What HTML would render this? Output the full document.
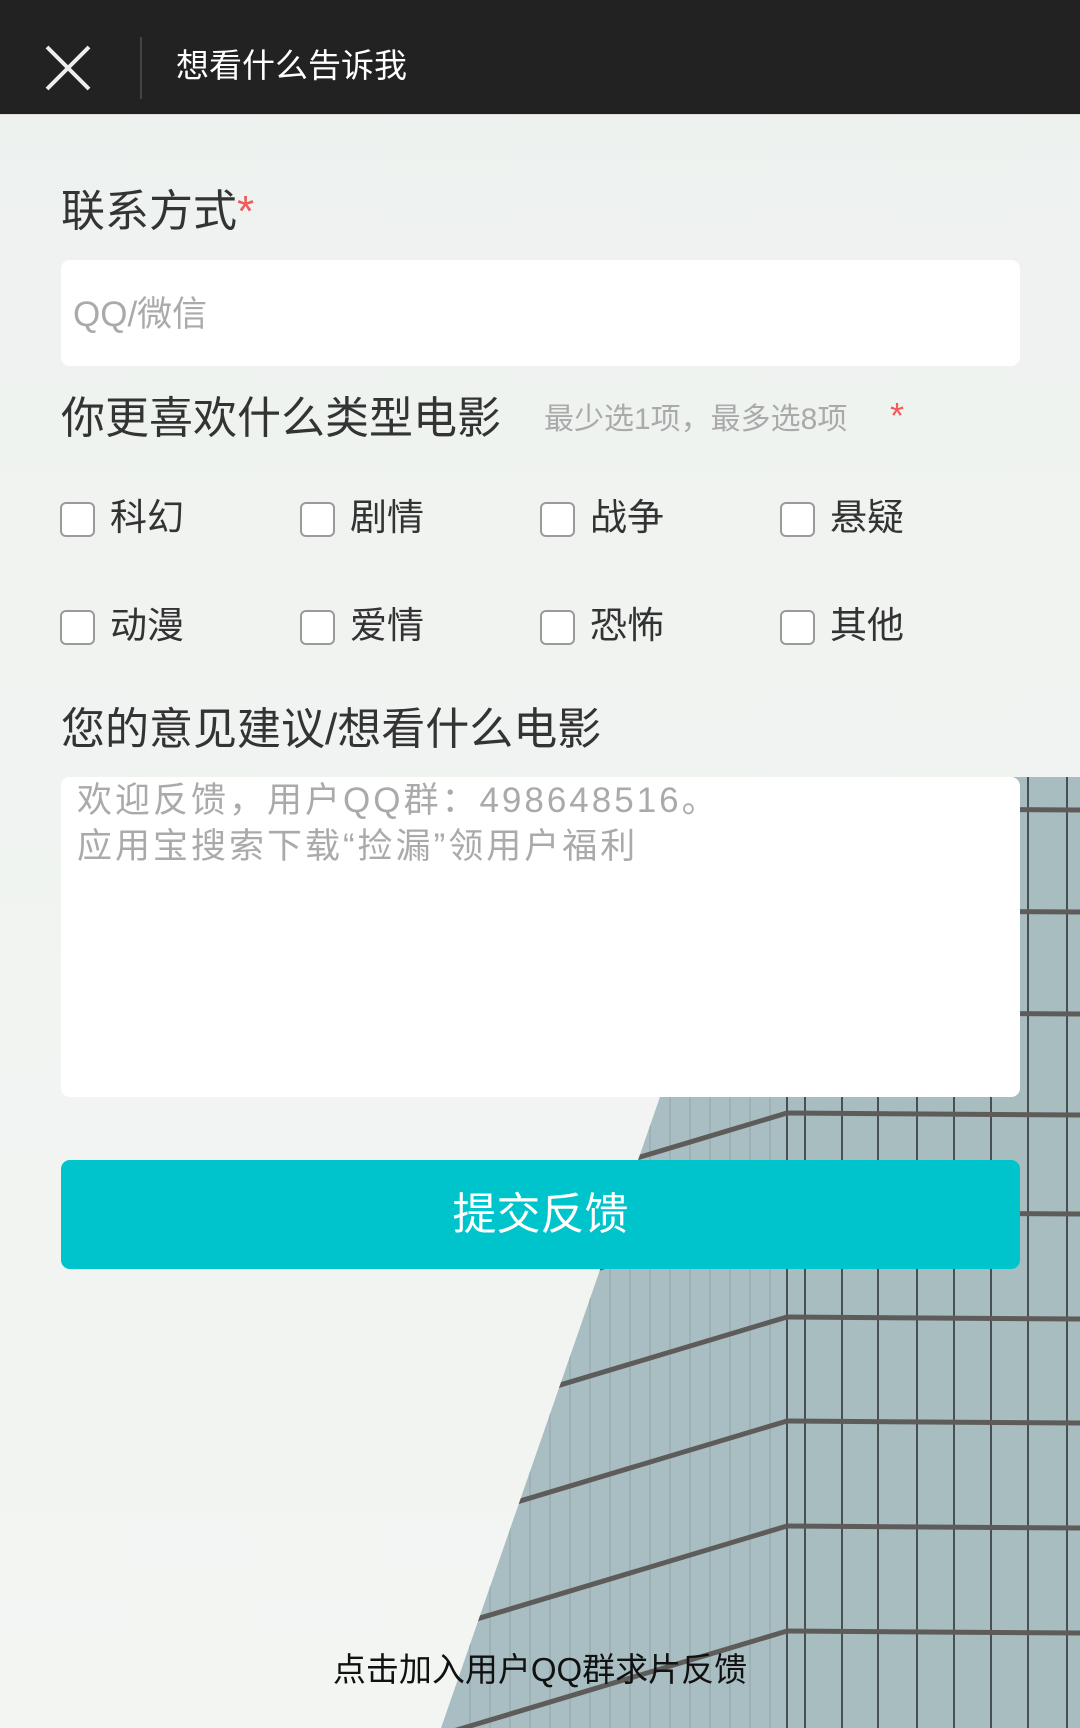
<!DOCTYPE html>
<html><head><meta charset="utf-8"><style>
*{margin:0;padding:0;box-sizing:border-box}
body{width:1080px;height:1728px;overflow:hidden;position:relative;background:#eff2ef;font-family:"Liberation Sans","Noto Sans CJK SC",sans-serif}
.bg{position:absolute;left:0;top:0}
.hdr{position:absolute;left:0;top:0;width:1080px;height:115px;background:#222222;border-bottom:1px solid #ddd}
.hdr .div{position:absolute;left:140px;top:37px;width:2px;height:62px;background:#444}
.hdr .t{position:absolute;left:176px;top:46px;font-size:33px;color:#fff;line-height:40px}
.a{position:absolute;color:#333;white-space:nowrap}
.box{position:absolute;background:#fff;border-radius:9px}
.cb{position:absolute;width:35px;height:35px;border:2px solid #9a9a9a;border-radius:6px;background:#fff}
.lab{position:absolute;font-size:37px;color:#333;line-height:44px}
.btn{position:absolute;left:61px;top:1160px;width:959px;height:109px;background:#00c4cc;border-radius:9px;color:#fff;font-size:44px;text-align:center;line-height:109px}
</style></head><body>
<svg class="bg" width="1080" height="1728" viewBox="0 0 1080 1728">
<defs>
<linearGradient id="sky" x1="0" y1="0" x2="0" y2="1"><stop offset="0" stop-color="#eef2ef"/><stop offset="1" stop-color="#f3f5f3"/></linearGradient>
<clipPath id="bld"><polygon points="441,1728 771,777 1080,777 1080,1728"/></clipPath>
</defs>
<rect width="1080" height="1728" fill="url(#sky)"/>
<g clip-path="url(#bld)">
<rect x="400" y="770" width="680" height="960" fill="#a9bec2"/>
<rect x="787" y="770" width="293" height="960" fill="#a8bdc0"/>
<g stroke="#93a7aa" stroke-width="1">
<line x1="470" y1="770" x2="470" y2="1728"/><line x1="490" y1="770" x2="490" y2="1728"/><line x1="510" y1="770" x2="510" y2="1728"/><line x1="530" y1="770" x2="530" y2="1728"/><line x1="550" y1="770" x2="550" y2="1728"/><line x1="570" y1="770" x2="570" y2="1728"/><line x1="590" y1="770" x2="590" y2="1728"/><line x1="610" y1="770" x2="610" y2="1728"/><line x1="630" y1="770" x2="630" y2="1728"/><line x1="650" y1="770" x2="650" y2="1728"/><line x1="670" y1="770" x2="670" y2="1728"/><line x1="690" y1="770" x2="690" y2="1728"/><line x1="710" y1="770" x2="710" y2="1728"/><line x1="730" y1="770" x2="730" y2="1728"/><line x1="750" y1="770" x2="750" y2="1728"/><line x1="770" y1="770" x2="770" y2="1728"/>
</g>
<g stroke="#4a5052" stroke-width="2">
<line x1="787" y1="770" x2="787" y2="1728"/><line x1="805" y1="770" x2="805" y2="1728"/><line x1="842" y1="770" x2="842" y2="1728"/><line x1="878" y1="770" x2="878" y2="1728"/><line x1="917" y1="770" x2="917" y2="1728"/><line x1="954" y1="770" x2="954" y2="1728"/><line x1="991" y1="770" x2="991" y2="1728"/><line x1="1028" y1="770" x2="1028" y2="1728"/><line x1="1067" y1="770" x2="1067" y2="1728"/>
</g>
<g stroke="#5e5c5a" stroke-width="5">
<line x1="787" y1="808" x2="1080" y2="810"/><line x1="787" y1="910" x2="1080" y2="912"/><line x1="787" y1="1012" x2="1080" y2="1014"/><line x1="787" y1="1113" x2="1080" y2="1115"/><line x1="787" y1="1212" x2="1080" y2="1214"/><line x1="787" y1="1317" x2="1080" y2="1319"/><line x1="787" y1="1421" x2="1080" y2="1423"/><line x1="787" y1="1526" x2="1080" y2="1528"/><line x1="787" y1="1631" x2="1080" y2="1633"/>
<line x1="787" y1="1113" x2="400" y2="1229"/><line x1="787" y1="1212" x2="400" y2="1328"/><line x1="787" y1="1317" x2="400" y2="1433"/><line x1="787" y1="1421" x2="400" y2="1537"/><line x1="787" y1="1526" x2="400" y2="1642"/><line x1="787" y1="1631" x2="400" y2="1747"/>
</g>
</g>
</svg>
<div class="hdr">
<svg style="position:absolute;left:44px;top:44px" width="48" height="48" viewBox="0 0 48 48"><path d="M3 3L45 45M45 3L3 45" stroke="#eee" stroke-width="4"/></svg>
<div class="div"></div>
<div class="t">想看什么告诉我</div>
</div>
<div class="a" style="left:61px;top:186px;font-size:44px;line-height:52px">联系方式<span style="color:#f05a5a">*</span></div>
<div class="box" style="left:61px;top:260px;width:959px;height:106px"></div>
<div class="a" style="left:73px;top:294px;font-size:35px;color:#aaa;line-height:42px">QQ/微信</div>
<div class="a" style="left:61px;top:393px;font-size:44px;line-height:52px">你更喜欢什么类型电影</div>
<div class="a" style="left:544px;top:402px;font-size:30px;color:#aaa;line-height:36px">最少选1项，最多选8项</div>
<div class="a" style="left:890px;top:398px;font-size:36px;color:#f05a5a;line-height:36px">*</div>
<div class="cb" style="left:60px;top:502px"></div><div class="lab" style="left:110px;top:496px">科幻</div>
<div class="cb" style="left:300px;top:502px"></div><div class="lab" style="left:350px;top:496px">剧情</div>
<div class="cb" style="left:540px;top:502px"></div><div class="lab" style="left:590px;top:496px">战争</div>
<div class="cb" style="left:780px;top:502px"></div><div class="lab" style="left:830px;top:496px">悬疑</div>
<div class="cb" style="left:60px;top:610px"></div><div class="lab" style="left:110px;top:604px">动漫</div>
<div class="cb" style="left:300px;top:610px"></div><div class="lab" style="left:350px;top:604px">爱情</div>
<div class="cb" style="left:540px;top:610px"></div><div class="lab" style="left:590px;top:604px">恐怖</div>
<div class="cb" style="left:780px;top:610px"></div><div class="lab" style="left:830px;top:604px">其他</div>
<div class="a" style="left:61px;top:704px;font-size:44px;line-height:52px">您的意见建议/想看什么电影</div>
<div class="box" style="left:61px;top:777px;width:959px;height:320px"></div>
<div class="a" style="left:77px;top:778px;font-size:35px;color:#aaa;line-height:46px;letter-spacing:3px">欢迎反馈，用户QQ群：498648516。<br>应用宝搜索下载“捡漏”领用户福利</div>
<div class="btn">提交反馈</div>
<div class="a" style="left:0;width:1080px;text-align:center;top:1650px;font-size:33px;color:#111;line-height:40px">点击加入用户QQ群求片反馈</div>
</body></html>
